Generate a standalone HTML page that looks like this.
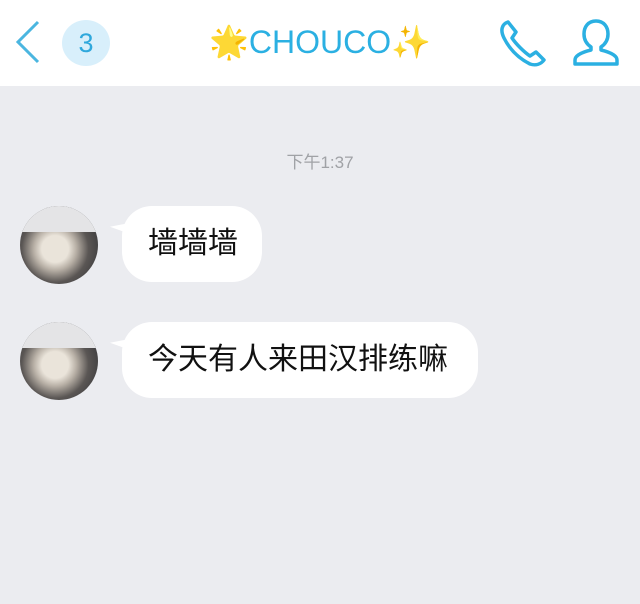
<!DOCTYPE html>
<html><head><meta charset="utf-8"><style>
body{margin:0;width:640px;height:604px;background:#ebecf0;font-family:"Liberation Sans","Noto Sans CJK SC",sans-serif;position:relative;overflow:hidden}
.hdr{position:absolute;left:0;top:0;width:640px;height:86px;background:#fff}
.badge{position:absolute;left:62px;top:20px;width:48px;height:46px;border-radius:50%;background:#d8effb;color:#2fa8dc;font-size:27px;text-align:center;line-height:46px}
.title{position:absolute;left:0;width:640px;top:22px;text-align:center;font-size:32px;color:#2bb0e2;line-height:40px}
.time{position:absolute;top:148px;width:640px;text-align:center;font-size:17px;color:#a0a2a6}
.av{position:absolute;left:20px;width:78px;height:78px;border-radius:50%;background:radial-gradient(ellipse at 45% 55%,#eae4da 0 22%,#b8b0a6 35%,#5a5654 55%,#3a3a3c 80%);overflow:hidden}
.av:before{content:"";position:absolute;left:0;top:0;width:78px;height:26px;background:#e4e4e6}
.b{position:absolute;left:122px;height:76px;background:#fff;border-radius:30px;font-size:30px;line-height:76px;padding:0 26px;color:#111;box-sizing:border-box;white-space:nowrap}
.b:before{content:"";position:absolute;left:-12px;top:14px;border-right:18px solid #fff;border-top:10px solid transparent;transform:skewY(20deg)}
</style></head><body>
<div class="hdr">
<svg style="position:absolute;left:12px;top:18px" width="30" height="48"><path d="M26 4 L6 24 L26 44" fill="none" stroke="#4bb6e0" stroke-width="3"/></svg>
<div class="badge">3</div>
<div class="title"><span style="color:#f0b020">🌟</span>CHOUCO<span style="color:#f3c93a">✨</span></div>
<svg style="position:absolute;left:498px;top:18px" width="52" height="50" viewBox="0 0 52 50"><path d="M10 4 C4 6 2 12 6 20 C12 32 20 40 32 46 C38 48 43 46 46 42 L38 34 L32 38 C26 34 18 26 14 20 L18 14 Z" fill="none" stroke="#2bb0e2" stroke-width="3.5" stroke-linejoin="round"/></svg>
<svg style="position:absolute;left:570px;top:18px" width="52" height="50" viewBox="0 0 52 50"><path d="M26 3 C18 3 14 9 14 16 C14 23 18 27 21 29 L21 32 C13 34 5 37 5 42 L5 46 L47 46 L47 42 C47 37 39 34 31 32 L31 29 C34 27 38 23 38 16 C38 9 34 3 26 3 Z" fill="none" stroke="#2bb0e2" stroke-width="3.5" stroke-linejoin="round"/></svg>
</div>
<div class="time">下午1:37</div>
<div class="av" style="top:206px"></div>
<div class="b" style="top:206px;width:140px">墙墙墙</div>
<div class="av" style="top:322px"></div>
<div class="b" style="top:322px;width:356px">今天有人来田汉排练嘛</div>
</body></html>
